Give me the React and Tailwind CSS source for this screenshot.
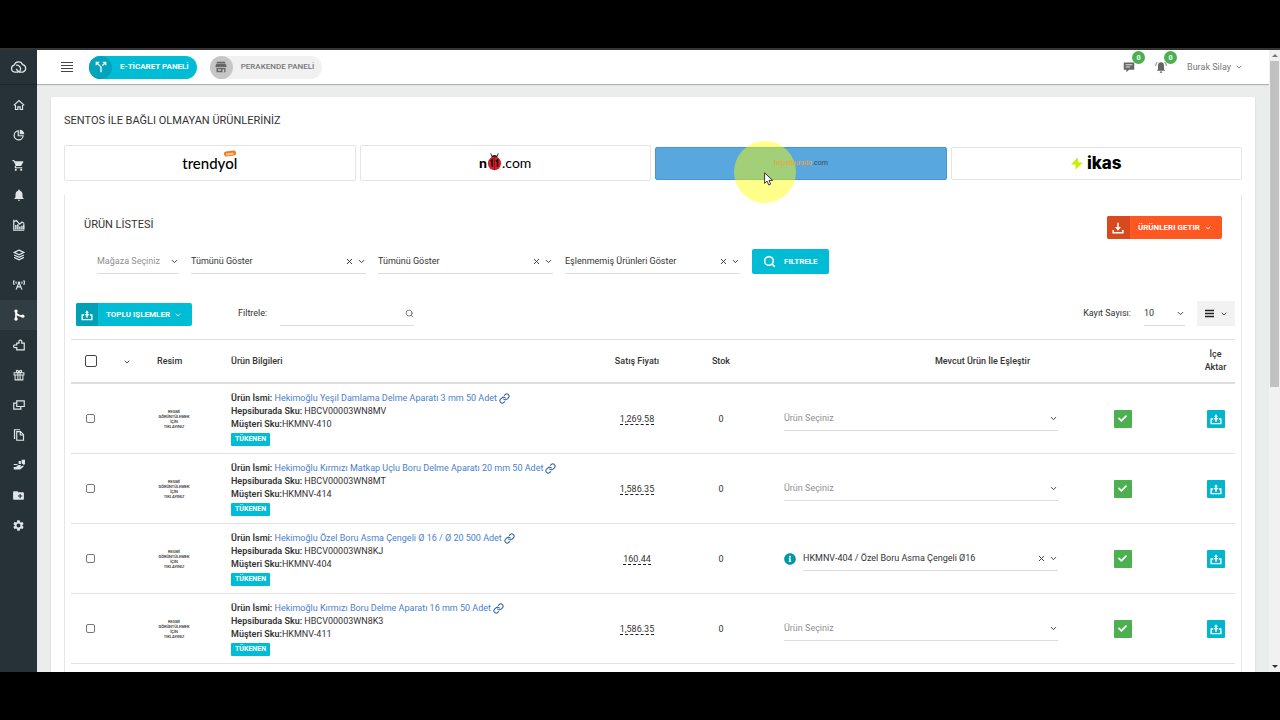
import React, { useState } from "react";
import { ChevronDown, X, Search, Link } from "lucide-react";
import { MdCallSplit, MdNotifications, MdShoppingCart, MdCreateNewFolder, MdSettings } from "react-icons/md";
import { FaBroadcastTower, FaCheck, FaInfoCircle } from "react-icons/fa";

/* ---------- Icons ---------- */

const Svg = ({ size = 12, children, className = "", box = 16 }) => (
  <svg
    width={size}
    height={size}
    viewBox={`0 0 ${box} ${box}`}
    fill="none"
    stroke="currentColor"
    strokeWidth="1.6"
    aria-hidden="true"
    className={`shrink-0 ${className}`}
  >
    {children}
  </svg>
);

const CloudLogo = () => (
  <Svg size={17} box={18}>
    <path d="M8.500 13.800H5a3.700 3.700 0 0 1-.5-7.300A4.700 4.700 0 0 1 13.400 6a4 4 0 0 1 .2 7.800H9.500L6.500 10.600" strokeWidth="1.300" strokeLinejoin="round" />
    <path d="M9.500 13.800c1.800-1.500 2.200-3.600 1-5.400C9.400 6.800 7.800 6.300 6.500 6.700" strokeWidth="1.300" />
  </Svg>
);
const HomeIcon = () => (
  <Svg>
    <path d="M1 8.500 8 2l7 6.500M3.300 8v6h3.200v-3.500h3V14h3.200V8" />
  </Svg>
);
const PieIcon = () => (
  <Svg>
    <path d="M7 2.500A6 6 0 1 0 13.500 9H7z" />
    <path d="M9 1v6h6a6 6 0 0 0-6-6z" fill="currentColor" stroke="none" />
  </Svg>
);
const ChartIcon = () => (
  <Svg>
    <path d="M1 1v14h14" />
    <path d="M3.800 14V8M6.500 14V7M9.200 14v-4M11.900 14V9M14.400 14V7" strokeWidth="2" />
    <path d="m1.500 3.500 3-1.500 4.500 5 3-3 3 2" />
  </Svg>
);
const StackIcon = () => (
  <Svg>
    <path d="m8 1.500 6.500 3L8 7.800 1.500 4.500z" />
    <path d="m1.500 8 6.500 3.200L14.500 8M1.500 11.200 8 14.500l6.500-3.300" />
  </Svg>
);
const MergeIcon = () => (
  <Svg>
    <circle cx="4" cy="2.800" r="2.300" fill="currentColor" stroke="none" />
    <circle cx="4" cy="13.200" r="2.300" fill="currentColor" stroke="none" />
    <circle cx="13" cy="9.500" r="2.300" fill="currentColor" stroke="none" />
    <path d="M4 3v10M4 4c1 4 4 5.300 8 5.500" strokeWidth="2.200" />
  </Svg>
);
const PuzzleIcon = () => (
  <Svg>
    <path d="M5 5.500h3V4a1.900 1.900 0 1 1 3.600 0v1.500H15V14.500H5v-3H3a1.800 1.800 0 1 1 0-3.500h2z" />
  </Svg>
);
const GiftIcon = () => (
  <Svg>
    <path d="M1.500 5h13v3h-13zM2.800 8v6.500h10.400V8M6.500 5v9.500M9.500 5v9.500M8 5C6 5 4 4 4.500 2.300 5.500.8 7.500 2 8 5c.5-3 2.500-4.200 3.500-2.700C12 4 10 5 8 5z" strokeWidth="1.400" />
  </Svg>
);
const WindowsIcon = () => (
  <Svg>
    <path d="M5 2.500h10v7.500H5z" />
    <path d="M5 5.500H1v8h9.500V10" />
  </Svg>
);
const FilesIcon = () => (
  <Svg>
    <path d="M5 3.500h5l4 4V15H5zM9.700 3.500V8H14" />
    <path d="M3 12.500H2V1h7.500" />
  </Svg>
);
const HandIcon = () => (
  <Svg>
    <path d="M1 10.500h3l3-2.500h4l-2 2.200 5-1.700v1.800L9.500 14H1z" fill="currentColor" stroke="none" />
    <path d="M1 6.500h5v1.500H1zM7.500 2.500h3v4h-3zM11.500 1H16v6l-2 .5-2.500-2z" fill="currentColor" stroke="none" />
  </Svg>
);
const StoreIcon = () => (
  <Svg size={12}>
    <path d="M2.500 1h11v1.500h-11zM2 3.200h12L15.500 7c0 1.300-2 1.800-2.500.5-.5 1.300-2.800 1.300-3.300 0-.5 1.300-2.900 1.300-3.400 0-.5 1.300-2.800 1.300-3.300 0C2.500 8.800.5 8.300.5 7z" fill="currentColor" stroke="none" />
    <path d="M2 9.300h12V15H2z" fill="currentColor" stroke="none" />
    <path d="M4 11h4v2H4zM10 11h2.200v4H10z" fill="#c6c6c6" stroke="none" />
  </Svg>
);
const TrayUpIcon = () => (
  <Svg size={12}>
    <path d="M4 8H1.500v6.200h13V8H12" strokeWidth="1.800" />
    <path d="M8 11.500V4M5 7.500h6" strokeWidth="1.900" />
    <path d="M5.500 5 8 1.800 10.500 5z" fill="currentColor" stroke="none" />
  </Svg>
);
const TrayDownIcon = () => (
  <Svg size={12}>
    <path d="M1.500 10.500v3.700h13v-3.700" strokeWidth="2" />
    <path d="M8 1v8" strokeWidth="2" />
    <path d="M4 6.500h8L8 11.500z" fill="currentColor" stroke="none" />
  </Svg>
);
const ChatIcon = () => (
  <Svg>
    <path d="M1 2h14v9.500H8L4.500 15v-3.500H1z" fill="currentColor" stroke="none" />
    <path d="M3.500 5h9M3.500 8h6" stroke="#fff" strokeWidth="1.100" />
  </Svg>
);
const BellRingIcon = () => (
  <Svg>
    <path d="M8 1.500c3 0 4 2 4 5V11l1.500 2h-11L4 11V6.500c0-3 1-5 4-5zM6.500 14h3v1.500h-3z" fill="currentColor" stroke="none" />
    <path d="M3 1.500C1.600 2.800 1 4.500 1 6.500M13 1.500c1.400 1.300 2 3 2 5" strokeWidth="1.200" />
  </Svg>
);

/* ---------- Data ---------- */

const NAV = [
  { label: "Ana Sayfa", icon: <HomeIcon /> },
  { label: "Raporlar", icon: <PieIcon /> },
  { label: "Siparişler", icon: <MdShoppingCart size={13} /> },
  { label: "Bildirimler", icon: <MdNotifications size={14} /> },
  { label: "İstatistik", icon: <ChartIcon /> },
  { label: "Ürünler", icon: <StackIcon /> },
  { label: "Yayın", icon: <FaBroadcastTower size={12} /> },
  { label: "Entegrasyon", icon: <MergeIcon />, active: true },
  { label: "Eklentiler", icon: <PuzzleIcon /> },
  { label: "Kampanyalar", icon: <GiftIcon /> },
  { label: "Pencereler", icon: <WindowsIcon /> },
  { label: "Belgeler", icon: <FilesIcon /> },
  { label: "Destek", icon: <HandIcon /> },
  { label: "Arşiv", icon: <MdCreateNewFolder size={13} /> },
  { label: "Ayarlar", icon: <MdSettings size={13} /> },
];

const PRODUCTS = [
  { name: "Hekimoğlu Yeşil Damlama Delme Aparatı 3 mm 50 Adet", sku: "HBCV00003WN8MV", code: "HKMNV-410", price: "1,269.58" },
  { name: "Hekimoğlu Kırmızı Matkap Uçlu Boru Delme Aparatı 20 mm 50 Adet", sku: "HBCV00003WN8MT", code: "HKMNV-414", price: "1,586.35" },
  { name: "Hekimoğlu Özel Boru Asma Çengeli Ø 16 / Ø 20 500 Adet", sku: "HBCV00003WN8KJ", code: "HKMNV-404", price: "160.44", match: "HKMNV-404 / Özel Boru Asma Çengeli Ø16" },
  { name: "Hekimoğlu Kırmızı Boru Delme Aparatı 16 mm 50 Adet", sku: "HBCV00003WN8K3", code: "HKMNV-411", price: "1,586.35" },
];

/* ---------- Parts ---------- */

function SelectField({ label, value, muted, clearable, className = "" }) {
  return (
    <div className={`relative h-[25px] border-b border-[#dcdcdc] ${className}`}>
      <select aria-label={label} className={`block h-full w-full appearance-none bg-transparent outline-none ${muted ? "text-[#8f8f8f]" : "text-[#333]"}`}>
        <option>{value}</option>
      </select>
      {clearable && (
        <button aria-label="Temizle" className="absolute top-2 right-3 text-[#333]">
          <X size={9} strokeWidth={2.5} />
        </button>
      )}
      <ChevronDown size={9} strokeWidth={2.5} className="pointer-events-none absolute top-2 right-0 text-[#333]" />
    </div>
  );
}

function IconCount({ label, children }) {
  return (
    <button aria-label={label} className="relative text-[#666]">
      {children}
      <span className="absolute -top-2.5 left-[9px] flex size-[13px] items-center justify-center rounded-full bg-[#4caf50] text-[7px] font-bold text-white">
        0
      </span>
    </button>
  );
}

function Sidebar() {
  return (
    <aside className="w-[37px] shrink-0 bg-[#263238] text-[#dfe5e8]">
      <a href="#" aria-label="Sentos" className="flex h-[35px] items-center justify-center border-b border-[#1c262b]">
        <CloudLogo />
      </a>
      <nav className="flex flex-col pt-[5px]">
        {NAV.map((item) => (
          <a
            key={item.label}
            href="#"
            aria-label={item.label}
            className={`flex h-[30px] items-center justify-center ${item.active ? "bg-[#313d43] text-white" : ""}`}
          >
            {item.icon}
          </a>
        ))}
      </nav>
    </aside>
  );
}

function Header() {
  return (
    <header className="flex h-[34px] shrink-0 items-center bg-white pr-[26px] pl-6 shadow-[0_1px_1px_rgba(0,0,0,0.25)]">
      <button aria-label="Menü" className="text-[#444]">
        <Svg size={12} box={12}>
          <path d="M0 1.500h12M0 4.500h12M0 7.500h12M0 10.500h12" strokeWidth="1.200" />
        </Svg>
      </button>
      <button className="ml-4 flex h-[23px] items-center rounded-full bg-[#00bcd4] pr-2 text-[8px] font-bold text-white">
        <span className="mr-2 flex size-[23px] items-center justify-center rounded-full bg-[#00a5bb]">
          <MdCallSplit size={16} />
        </span>
        E-TİCARET PANELİ
      </button>
      <button className="ml-[13px] flex h-[23px] items-center rounded-full bg-[#f1f1f1] pr-2 text-[8px] font-medium text-[#777]">
        <span className="mr-2 flex size-[23px] items-center justify-center rounded-full bg-[#c6c6c6] text-[#666]">
          <StoreIcon />
        </span>
        PERAKENDE PANELİ
      </button>
      <div className="ml-auto flex items-center gap-5">
        <IconCount label="Mesajlar"><ChatIcon /></IconCount>
        <IconCount label="Bildirimler"><BellRingIcon /></IconCount>
        <button className="flex items-center gap-1 text-[#777]">
          Burak Silay <ChevronDown size={8} strokeWidth={2.5} />
        </button>
      </div>
    </header>
  );
}

function MarketTabs() {
  return (
    <div className="mt-[17px] grid grid-cols-4 items-center gap-1">
      <button aria-label="trendyol" className="flex h-9 items-center justify-center rounded-xs border border-[#e4e4e4]">
        <span className="relative font-[Lato,sans-serif] text-[15px] leading-4 font-medium text-black">
          trendyol
          <span className="absolute -top-1 right-0.5 -rotate-6 rounded-xs bg-[#f27a1a] px-0.5 text-[4px] leading-[5px] font-bold text-white">
            com
          </span>
        </span>
      </button>
      <button aria-label="n11.com" className="flex h-9 items-center justify-center rounded-xs border border-[#e4e4e4] font-[Lato,sans-serif] text-[14px] text-black">
        <b className="font-black">n</b>
        <svg width="15" height="19" viewBox="0 0 16 19" className="-mt-1" aria-hidden="true">
          <path d="M5 3.500 4 .8M11 3.500l1-2.700" stroke="#222" />
          <path d="M4.500 5.500a3.500 3 0 0 1 7 0z" fill="#222" />
          <ellipse cx="8" cy="11.500" rx="7" ry="7.200" fill="#d3222a" />
          <path d="M8 4.500v14" stroke="#7d1216" strokeWidth="0.800" />
          <path d="M3.800 9.500 5.600 8v7M9.500 9.500 11.300 8v7" stroke="#2a0a0b" strokeWidth="1.800" fill="none" />
        </svg>
        .com
      </button>
      <button aria-label="hepsiburada.com" className="relative flex h-[33px] items-center justify-center rounded-xs border border-[#4697cf] bg-[#58a7df] text-[7px] text-[#2f4a5c]">
        {/* click highlight and pointer */}
        <span className="pointer-events-none absolute -top-[7px] left-[78px] z-10 size-[62px] rounded-full bg-[#ffff00]/46" />
        <span className="relative z-20 text-[#e8a33a]">hepsiburada</span>
        <span className="relative z-20">.com</span>
        <svg width="10" height="14" viewBox="0 0 10 14" className="pointer-events-none absolute top-6 left-[108px] z-20" aria-hidden="true">
          <path d="M.6.800v10.600l2.500-2.300 1.600 3.800 1.900-.8L5 8.400h3.600z" fill="#fff" stroke="#222" strokeWidth="0.900" />
        </svg>
      </button>
      <button aria-label="ikas" className="flex h-[33px] items-center justify-center gap-1 rounded-xs border border-[#e4e4e4] font-[Inter,sans-serif] text-[17px] font-extrabold text-black">
        <svg width="12" height="13" viewBox="0 0 12 13" aria-hidden="true">
          <path d="M6.500.5 0 7.500h4.500v5l7.500-7H7.500z" fill="#c6f000" />
        </svg>
        ikas
      </button>
    </div>
  );
}

function ProductRow({ product }) {
  return (
    <tr className="h-[70px] *:border-b *:border-[#e2e2e2]">
      <td>
        <input type="checkbox" aria-label={product.code} className="mx-auto block size-[9px] appearance-none rounded-xs border border-[#777] bg-white" />
      </td>
      <td />
      <td className="pl-[13px]">
        <button className="flex w-[34px] flex-col items-center text-[4px] leading-[5px] font-medium text-[#222]">
          <span>RESMİ</span>
          <span>GÖRÜNTÜLEMEK</span>
          <span>İÇİN</span>
          <span>TIKLAYINIZ</span>
        </button>
      </td>
      <td className="pl-[13px] leading-[13px]">
        <div className="whitespace-nowrap">
          <b className="font-semibold">Ürün İsmi:</b>{" "}
          <a href="#" className="text-[#4a80cc]">
            {product.name}
            <Link size={11} strokeWidth={2.2} className="ml-0.5 inline-block text-[#2f5f9e]" />
          </a>
        </div>
        <div><b className="font-semibold">Hepsiburada Sku:</b> {product.sku}</div>
        <div><b className="font-semibold">Müşteri Sku:</b>{product.code}</div>
        <span className="mt-0.5 block w-fit rounded-[1px] bg-[#00bcd4] px-1 text-[7px] leading-[13px] font-bold text-white">TÜKENEN</span>
      </td>
      <td className="text-center">
        <a href="#" className="border-b border-dashed border-[#222]">{product.price}</a>
      </td>
      <td className="text-center">0</td>
      <td className="pr-[13px] pl-[15px]">
        <div className="flex items-center gap-[7px]">
          {product.match && <FaInfoCircle size={12} className="shrink-0 text-[#0097a7]" />}
          <SelectField
            label={`${product.code} eşleştir`}
            value={product.match || "Ürün Seçiniz"}
            muted={!product.match}
            clearable={!!product.match}
            className="flex-1"
          />
        </div>
      </td>
      <td className="pl-[43px]">
        <button aria-label="Onayla" className="flex size-[18px] items-center justify-center rounded-[1px] bg-[#4caf50] text-white">
          <FaCheck size={9} />
        </button>
      </td>
      <td>
        <button aria-label="İçe Aktar" className="mx-auto flex size-[18px] items-center justify-center rounded-[1px] bg-[#00b5cc] text-white">
          <TrayUpIcon />
        </button>
      </td>
    </tr>
  );
}

function ProductTable() {
  return (
    <table className="w-full table-fixed border-separate border-spacing-0">
      <colgroup>
        <col className="w-[39px]" />
        <col className="w-[34px]" />
        <col className="w-[74px]" />
        <col />
        <col className="w-[72px]" />
        <col className="w-[96px]" />
        <col className="w-[302px]" />
        <col className="w-[125px]" />
        <col className="w-[39px]" />
      </colgroup>
      <thead>
        <tr className="h-[45px] *:border-t *:border-b-2 *:border-[#dedede] *:font-medium">
          <th>
            <input type="checkbox" aria-label="Tümünü seç" className="mx-auto block size-3 appearance-none rounded-xs border border-[#444] bg-white" />
          </th>
          <th>
            <button aria-label="Seçim menüsü" className="align-middle"><ChevronDown size={8} strokeWidth={2.5} /></button>
          </th>
          <th className="pl-[13px] text-left">Resim</th>
          <th className="pl-[13px] text-left">Ürün Bilgileri</th>
          <th>Satış Fiyatı</th>
          <th>Stok</th>
          <th colSpan={2}>Mevcut Ürün İle Eşleştir</th>
          <th className="leading-[13px]">İçe<br />Aktar</th>
        </tr>
      </thead>
      <tbody>
        {PRODUCTS.map((product) => (
          <ProductRow key={product.code} product={product} />
        ))}
      </tbody>
    </table>
  );
}

function ProductPanel() {
  const [query, setQuery] = useState("");

  return (
    <section className="mt-[14px] flex-1 border-x border-[#e6e6e6] px-1.5 pt-[21px]">
      <div className="flex items-start justify-between px-[13px]">
        <h2 className="text-[11px] leading-[18px] text-[#333]">ÜRÜN LİSTESİ</h2>
        <button className="flex h-[23px] items-center gap-1 overflow-hidden rounded-xs bg-[#ff5722] pr-2.5 text-[8px] font-bold text-white">
          <span className="mr-1 flex h-full w-[23px] items-center justify-center bg-[#d84a1d]"><TrayDownIcon /></span>
          ÜRÜNLERI GETIR
          <ChevronDown size={8} strokeWidth={3} />
        </button>
      </div>

      {/* filters */}
      <div className="mt-2.5 flex gap-3 pl-[26px]">
        <SelectField label="Mağaza" value="Mağaza Seçiniz" muted className="w-[82px]" />
        <SelectField label="Durum" value="Tümünü Göster" clearable className="w-[175px]" />
        <SelectField label="Stok durumu" value="Tümünü Göster" clearable className="w-[175px]" />
        <SelectField label="Eşleşme" value="Eşlenmemiş Ürünleri Göster" clearable className="w-[175px]" />
        <button className="flex h-[25px] items-center gap-2 rounded-xs bg-[#00bcd4] px-[11px] text-[8px] font-bold text-white">
          <Search size={13} strokeWidth={3} />
          FILTRELE
        </button>
      </div>

      {/* table toolbar */}
      <div className="mt-[27px] flex items-end pb-[13px] pl-[5px]">
        <button className="flex h-[23px] items-center gap-1 overflow-hidden rounded-xs bg-[#00bcd4] pr-2.5 text-[8px] font-bold text-white">
          <span className="mr-1 flex h-full w-[22px] items-center justify-center bg-[#00a0b5]"><TrayUpIcon /></span>
          TOPLU IŞLEMLER
          <ChevronDown size={8} strokeWidth={3} />
        </button>
        <label htmlFor="table-search" className="ml-[46px] h-[25px] leading-[25px]">Filtrele:</label>
        <div className="relative ml-[13px] h-[25px] w-[134px] border-b border-[#dcdcdc]">
          <input
            id="table-search"
            value={query}
            onChange={(e) => setQuery(e.target.value)}
            className="block h-full w-full bg-transparent pr-4 outline-none"
          />
          <Search size={9} className="absolute top-2 right-0 text-[#555]" />
        </div>
        <span className="ml-auto h-[25px] leading-[25px]">Kayıt Sayısı:</span>
        <SelectField label="Kayıt Sayısı" value="10" className="ml-[13px] w-[41px]" />
        <button aria-label="Sütunlar" className="ml-3 flex h-[25px] w-[38px] items-center justify-center gap-1.5 bg-[#f2f2f2] text-[#222]">
          <Svg size={9} box={9}><path d="M0 1.500h9M0 4.500h9M0 7.500h9" /></Svg>
          <ChevronDown size={8} strokeWidth={2.5} />
        </button>
      </div>

      <ProductTable />
    </section>
  );
}

function Scrollbar() {
  return (
    <div aria-hidden="true" className="flex w-[11px] shrink-0 flex-col items-center justify-between bg-[#f1f1f1] py-1">
      <span className="size-0 border-x-[3px] border-b-[3px] border-x-transparent border-b-[#777]" />
      <div className="mt-1 w-full flex-1">
        <div className="mx-auto h-[54%] w-[9px] bg-[#c1c1c1]" />
      </div>
      <span className="size-0 border-x-[3px] border-t-[3px] border-x-transparent border-t-[#333]" />
    </div>
  );
}

export default function App() {
  return (
    <div className="h-screen bg-black py-12 font-[Roboto,sans-serif] text-[9px] leading-[14px] text-[#333]">
      <div className="flex h-full overflow-hidden border-t-2 border-[#333]">
        <Sidebar />
        <div className="flex min-w-0 flex-1 flex-col bg-[#ebecec]">
          <Header />
          <main className="flex min-h-0 flex-1 flex-col overflow-hidden px-[14px] pt-[13px]">
            <div className="flex flex-1 flex-col rounded-t-xs bg-white px-[13px] pt-[17px] shadow-[0_1px_2px_rgba(0,0,0,0.15)]">
              <h1 className="text-[11px] text-[#333]">SENTOS İLE BAĞLI OLMAYAN ÜRÜNLERİNİZ</h1>
              <MarketTabs />
              <ProductPanel />
            </div>
          </main>
        </div>
        <Scrollbar />
      </div>
    </div>
  );
}
